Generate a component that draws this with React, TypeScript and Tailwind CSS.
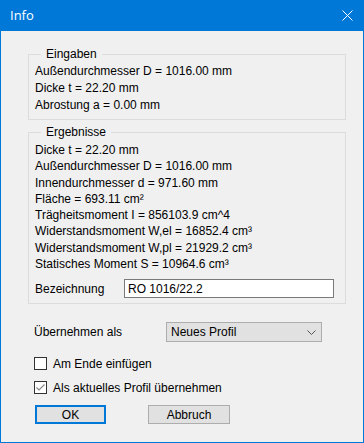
import React from "react";

const font = { fontFamily: '"Liberation Sans", Arial, sans-serif' };

function GroupBox({ title, children, className = "" }: { title: string; children: React.ReactNode; className?: string }) {
  return (
    <fieldset className={`border border-[#dcdcdc] px-[5px] ${className}`}>
      <legend className="ml-[7px] px-[5px] leading-[16px] text-[12px]">{title}</legend>
      {children}
    </fieldset>
  );
}

function Checkbox({ checked, label }: { checked?: boolean; label: string }) {
  return (
    <div className="flex items-center h-[13px]">
      <div className="w-[13px] h-[13px] border border-[#333] bg-white flex items-center justify-center">
        {checked && (
          <svg width="11" height="11" viewBox="0 0 11 11">
            <path d="M1.5 5.5 L4 8 L9.5 2.5" fill="none" stroke="#888" strokeWidth="1.2" />
          </svg>
        )}
      </div>
      <span className="ml-[6px]">{label}</span>
    </div>
  );
}

export default function App() {
  const eingaben = [
    "Außendurchmesser D = 1016.00 mm",
    "Dicke t = 22.20 mm",
    "Abrostung a = 0.00 mm",
  ];
  const ergebnisse = [
    "Dicke t = 22.20 mm",
    "Außendurchmesser D = 1016.00 mm",
    "Innendurchmesser d = 971.60 mm",
    "Fläche = 693.11 cm²",
    "Trägheitsmoment I = 856103.9 cm^4",
    "Widerstandsmoment W,el = 16852.4 cm³",
    "Widerstandsmoment W,pl = 21929.2 cm³",
    "Statisches Moment S = 10964.6 cm³",
  ];

  return (
    <div className="w-[364px] h-[443px] border border-[#0078d7] flex flex-col text-[12px] text-black" style={font}>
      {/* Title bar */}
      <div className="h-[30px] bg-[#0078d7] flex items-center justify-between pl-[9px] pr-[10px] text-white">
        <span className="text-[13px]" style={{ fontFamily: '"Open Sans", "Noto Sans", sans-serif' }}>Info</span>
        <svg width="11" height="11" viewBox="0 0 11 11" className="mt-[-2px]">
          <path d="M0.5 0.5 L10.5 10.5 M10.5 0.5 L0.5 10.5" stroke="white" strokeWidth="1" />
        </svg>
      </div>

      {/* Body */}
      <div className="flex-1 bg-[#f0f0f0] pl-[27px] pr-[17px] pt-[15px]">
        <GroupBox title="Eingaben" className="pt-[1px] pb-[5px]">
          {eingaben.map((t) => (
            <div key={t} className="leading-[17px] pl-[1px]">{t}</div>
          ))}
        </GroupBox>

        <GroupBox title="Ergebnisse" className="mt-[4px] pt-[2px] pb-[5px]">
          {ergebnisse.map((t, i) => (
            <div key={i} className="leading-[16.3px] pl-[1px]">{t}</div>
          ))}
          <div className="flex items-center mt-[7px] pr-[6px]">
            <span className="w-[90px] pl-[1px]">Bezeichnung</span>
            <div className="flex-1 h-[19px] bg-white border border-[#7a7a7a] flex items-center px-[3px]">RO 1016/22.2</div>
          </div>
        </GroupBox>

        <div className="flex items-center mt-[18px] pl-[6px]">
          <span className="w-[132px]">Übernehmen als</span>
          <div className="w-[156px] h-[20px] bg-[#e1e1e1] border border-[#adadad] flex items-center justify-between pl-[4px] pr-[4px]">
            <span>Neues Profil</span>
            <svg width="9" height="5" viewBox="0 0 9 5" className="mr-[1px]">
              <path d="M0.5 0.5 L4.5 4.5 L8.5 0.5" fill="none" stroke="#555" strokeWidth="1" />
            </svg>
          </div>
        </div>

        <div className="mt-[15px] pl-[6px] flex flex-col gap-[11px]">
          <Checkbox label="Am Ende einfügen" />
          <Checkbox checked label="Als aktuelles Profil übernehmen" />
        </div>

        <div className="flex mt-[11px] pl-[7px]">
          <button className="w-[71px] h-[19px] bg-[#e1e1e1] border-2 border-[#0078d7] flex items-center justify-center leading-none">OK</button>
          <button className="ml-[42px] w-[82px] h-[19px] bg-[#e1e1e1] border border-[#adadad] flex items-center justify-center leading-none">Abbruch</button>
        </div>
      </div>
    </div>
  );
}
